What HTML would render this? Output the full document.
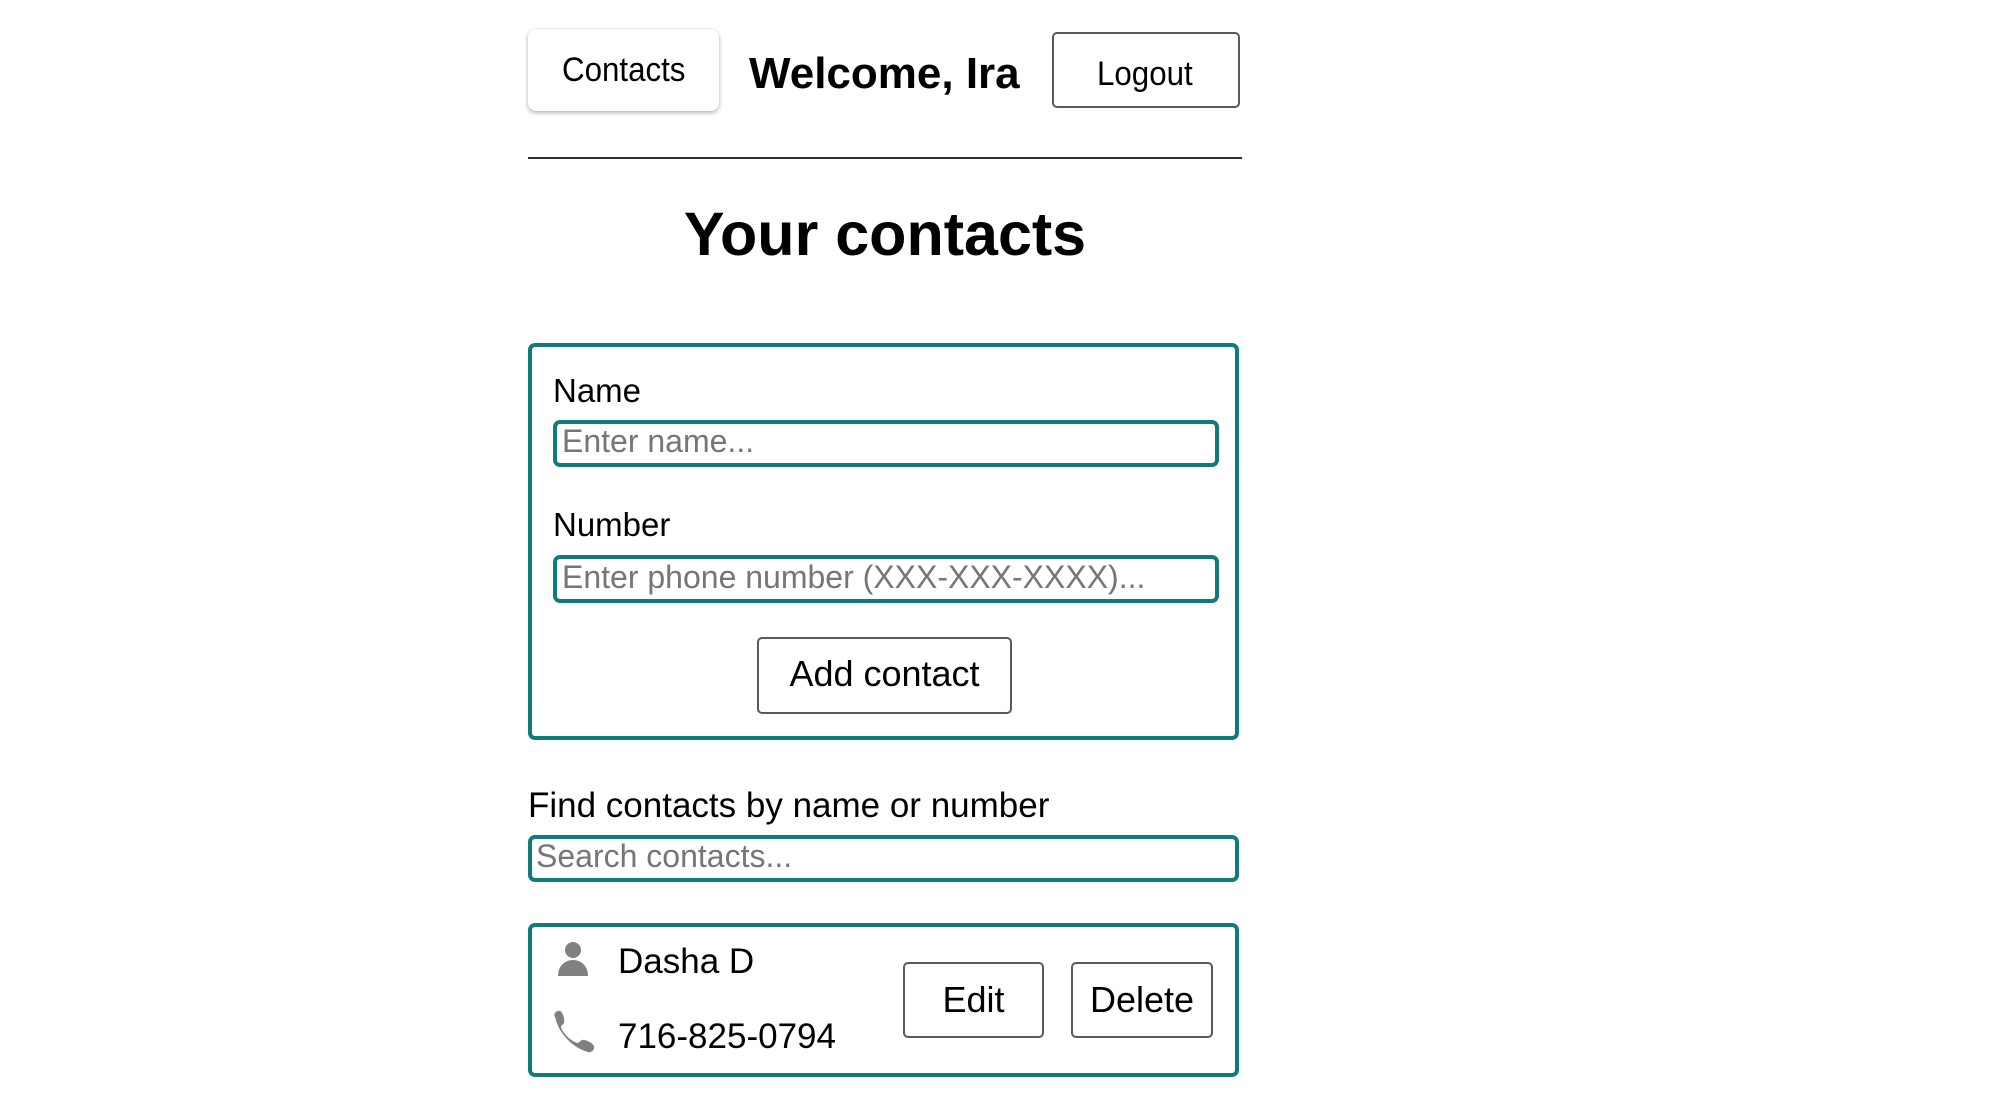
<!DOCTYPE html>
<html><head><meta charset="utf-8"><style>
html,body{margin:0;padding:0;background:#fff;width:2016px;height:1106px;overflow:hidden;font-family:"Liberation Sans",Arial,sans-serif;color:#000}
.a{position:absolute}
.t{position:absolute;white-space:nowrap;line-height:1}
.btn{position:absolute;box-sizing:border-box;border:2px solid #5a5a5a;border-radius:5px;background:#fff}
.inp{position:absolute;box-sizing:border-box;border:4px solid #117b7a;border-radius:7px;background:#fff}
.box{position:absolute;box-sizing:border-box;border:4px solid #117b7a;border-radius:7px}
.ph{color:#767676}
</style></head><body>
<div class="a" style="left:528px;top:29px;width:191px;height:82px;border-radius:8px;background:#fff;box-shadow:0 2px 5px rgba(0,0,0,0.28),0 0 2px rgba(0,0,0,0.08)"></div>
<div class="t" style="left:562px;top:53px;font-size:34px;transform:scaleX(0.92);transform-origin:left">Contacts</div>
<div class="t" style="left:749px;top:52px;font-size:44px;font-weight:bold">Welcome, Ira</div>
<div class="btn" style="left:1052px;top:32px;width:188px;height:76px"></div>
<div class="t" style="left:1097px;top:57px;font-size:34px;transform:scaleX(0.92);transform-origin:left">Logout</div>
<div class="a" style="left:528px;top:157px;width:714px;height:2px;background:#2a2f33"></div>
<div class="t" style="left:528px;width:714px;text-align:center;top:204px;font-size:61px;font-weight:bold">Your contacts</div>

<div class="box" style="left:528px;top:343px;width:711px;height:397px"></div>
<div class="t" style="left:553px;top:374px;font-size:33px">Name</div>
<div class="inp" style="left:553px;top:420px;width:666px;height:47px"></div>
<div class="t ph" style="left:562px;top:425px;font-size:32px">Enter name...</div>
<div class="t" style="left:553px;top:508px;font-size:33px">Number</div>
<div class="inp" style="left:553px;top:555px;width:666px;height:48px"></div>
<div class="t ph" style="left:562px;top:561px;font-size:32px">Enter phone number (XXX-XXX-XXXX)...</div>
<div class="btn" style="left:757px;top:637px;width:255px;height:77px"></div>
<div class="t" style="left:757px;width:255px;text-align:center;top:656px;font-size:36px">Add contact</div>

<div class="t" style="left:528px;top:788px;font-size:35px">Find contacts by name or number</div>
<div class="inp" style="left:528px;top:835px;width:711px;height:47px"></div>
<div class="t ph" style="left:536px;top:840px;font-size:32px">Search contacts...</div>

<div class="box" style="left:528px;top:923px;width:711px;height:154px"></div>
<svg class="a" style="left:556px;top:940px" width="36" height="40" viewBox="0 0 36 40">
<circle cx="17" cy="10" r="8" fill="#808080"/>
<path d="M2 36 C2 26 9 20 17 20 C25 20 32 26 32 36 Z" fill="#808080"/>
</svg>
<div class="t" style="left:618px;top:944px;font-size:35px">Dasha D</div>
<svg class="a" style="left:551px;top:1009px" width="46" height="46" viewBox="0 0 46 46">
<path d="M4 8 C2 5 5 1 9 2 C12 3 14 11 13 14 C12 16 10 16 10 18 C12 25 19 31 26 34 C28 34 29 32 31 31 C34 30 42 34 43 37 C44 41 40 44 37 43 C22 39 8 25 4 8 Z" fill="#808080"/>
</svg>
<div class="t" style="left:618px;top:1019px;font-size:35px">716-825-0794</div>
<div class="btn" style="left:903px;top:962px;width:141px;height:76px"></div>
<div class="t" style="left:903px;width:141px;text-align:center;top:982px;font-size:36px">Edit</div>
<div class="btn" style="left:1071px;top:962px;width:142px;height:76px"></div>
<div class="t" style="left:1071px;width:142px;text-align:center;top:982px;font-size:36px">Delete</div>
</body></html>
